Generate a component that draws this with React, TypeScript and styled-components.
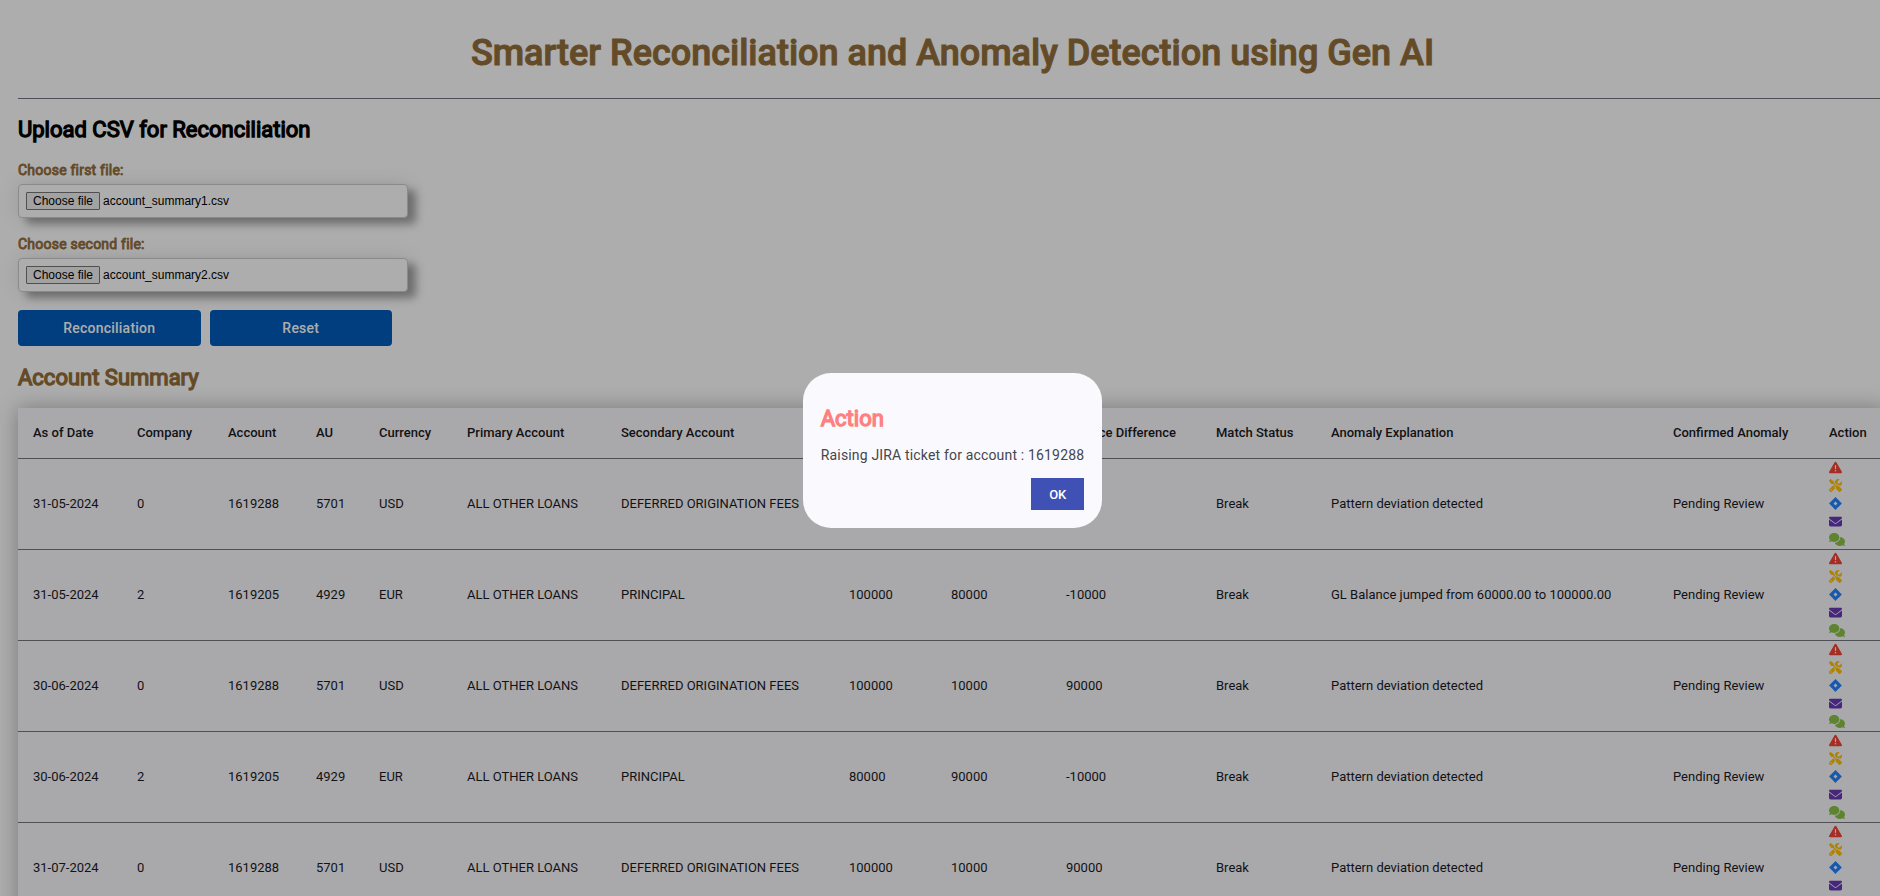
import React from 'react';
import styled, { createGlobalStyle } from 'styled-components';
import {
  FaTriangleExclamation,
  FaScrewdriverWrench,
  FaJira,
  FaEnvelope,
  FaComments,
} from 'react-icons/fa6';

const GlobalStyle = createGlobalStyle`
  *, *::before, *::after { box-sizing: border-box; }
  html { overflow: hidden; height: 100%; }
  body {
    margin: 0;
    height: 100%;
    overflow: hidden;
    background: #fff;
    color: #1a1b1f;
    font-family: Roboto, "Liberation Sans", sans-serif;
    font-size: 14px;
  }
`;

const Page = styled.div`
  margin-right: -25px;
  padding: 18px;
`;

const Title = styled.h1`
  margin: 0;
  padding: 11px 0 20px;
  border-bottom: 1px solid #74777f;
  color: #946f3c;
  font-size: 36px;
  font-weight: 500;
  line-height: 49px;
  text-align: center;
  -webkit-text-stroke: 1px currentColor;
`;

const Heading = styled.h2<{ $color?: string }>`
  margin: 0;
  color: ${({ $color }) => $color ?? '#000'};
  font-size: 22px;
  font-weight: 400;
  line-height: 28px;
  -webkit-text-stroke: 0.06em currentColor;
`;

const UploadForm = styled.form`
  display: flex;
  flex-direction: column;
  align-items: flex-start;
  padding: 17px 0 18px;
`;

const Field = styled.div`
  display: flex;
  flex-direction: column;
  width: 390px;
  margin-top: 16px;
`;

const FieldLabel = styled.label`
  margin-bottom: 4px;
  color: #946f3c;
  font-size: 14px;
  font-weight: 400;
  line-height: 20px;
  letter-spacing: 0.016em;
  -webkit-text-stroke: 0.06em currentColor;
`;

const FileInput = styled.input`
  position: absolute;
  width: 1px;
  height: 1px;
  opacity: 0;
`;

const FileBox = styled.label`
  display: flex;
  align-items: center;
  gap: 3px;
  height: 34px;
  padding: 0 7px;
  border: 1px solid #ccc;
  border-radius: 4px;
  background: #fff;
  box-shadow: 8px 6px 8px rgba(0, 0, 0, 0.34), 0 0 20px rgba(0, 0, 0, 0.1);
  color: #000;
  font-family: "Liberation Sans", Arial, sans-serif;
  font-size: 12px;
`;

const FileButton = styled.span`
  padding: 0 6px;
  border: 1px solid #767676;
  border-radius: 1px;
  background: #efefef;
  line-height: 16px;
`;

const Actions = styled.div`
  display: flex;
  gap: 9px;
  width: 374px;
  margin-top: 18px;
`;

const PrimaryButton = styled.button`
  flex: 1;
  height: 36px;
  border: 0;
  border-radius: 4px;
  background: #005cbb;
  color: #fff;
  font: 500 14px Roboto, sans-serif;
  letter-spacing: 0.016em;
`;

const Table = styled.table`
  width: 100%;
  margin-top: 16px;
  border-collapse: separate;
  border-spacing: 0;
  table-layout: fixed;
  background: #faf9fd;
  box-shadow: 0 0 20px rgba(0, 0, 0, 0.3);
  font-size: 13px;
  line-height: 18px;
  white-space: nowrap;
`;

const HeadCell = styled.th<{ $width: number }>`
  width: ${({ $width }) => $width}px;
  height: 51px;
  padding: 0 0 0 15px;
  border-bottom: 1px solid #74777f;
  font-weight: 500;
  text-align: left;
`;

const Cell = styled.td`
  padding: 0 0 0 15px;
  border-bottom: 1px solid #74777f;
`;

const IconStack = styled.div`
  display: flex;
  flex-direction: column;
  align-items: flex-start;
`;

const IconButton = styled.button<{ $color: string; $wide?: boolean }>`
  display: flex;
  align-items: center;
  height: 18px;
  padding: 0 0 2px;
  border: 0;
  background: none;
  color: ${({ $color }) => $color};

  svg {
    width: ${({ $wide }) => ($wide ? 16 : 13)}px;
    height: 13px;
  }
`;

const Backdrop = styled.div`
  position: fixed;
  inset: 0 -25px -5px 0;
  display: flex;
  align-items: center;
  justify-content: center;
  background: rgba(0, 0, 0, 0.32);
`;

const Dialog = styled.div`
  display: flex;
  flex-direction: column;
  padding: 32px 18px 18px;
  border-radius: 28px;
  background: #faf9fd;
`;

const DialogText = styled.p`
  margin: 12px 0 13px;
  color: #44474e;
  font-size: 14px;
  line-height: 20px;
  letter-spacing: 0.012em;
`;

const DialogButton = styled.button`
  align-self: flex-end;
  width: 53px;
  height: 32px;
  border: 0;
  background: #3f51b5;
  color: #fff;
  font: 500 13px Roboto, sans-serif;
`;

const columns: [string, number][] = [
  ['As of Date', 104],
  ['Company', 91],
  ['Account', 88],
  ['AU', 63],
  ['Currency', 88],
  ['Primary Account', 154],
  ['Secondary Account', 228],
  ['GL Balance', 102],
  ['iHub Balance', 115],
  ['Balance Difference', 150],
  ['Match Status', 115],
  ['Anomaly Explanation', 342],
  ['Confirmed Anomaly', 156],
  ['Action', 73],
];

const rows: string[][] = [
  ['31-05-2024', '0', '1619288', '5701', 'USD', 'ALL OTHER LOANS', 'DEFERRED ORIGINATION FEES', '15000', '10000', '5000', 'Break', 'Pattern deviation detected', 'Pending Review'],
  ['31-05-2024', '2', '1619205', '4929', 'EUR', 'ALL OTHER LOANS', 'PRINCIPAL', '100000', '80000', '-10000', 'Break', 'GL Balance jumped from 60000.00 to 100000.00', 'Pending Review'],
  ['30-06-2024', '0', '1619288', '5701', 'USD', 'ALL OTHER LOANS', 'DEFERRED ORIGINATION FEES', '100000', '10000', '90000', 'Break', 'Pattern deviation detected', 'Pending Review'],
  ['30-06-2024', '2', '1619205', '4929', 'EUR', 'ALL OTHER LOANS', 'PRINCIPAL', '80000', '90000', '-10000', 'Break', 'Pattern deviation detected', 'Pending Review'],
  ['31-07-2024', '0', '1619288', '5701', 'USD', 'ALL OTHER LOANS', 'DEFERRED ORIGINATION FEES', '100000', '10000', '90000', 'Break', 'Pattern deviation detected', 'Pending Review'],
];

const rowActions = [
  { label: 'Flag anomaly', color: '#f44336', Icon: FaTriangleExclamation },
  { label: 'Resolve', color: '#ffc107', Icon: FaScrewdriverWrench },
  { label: 'Raise JIRA ticket', color: '#2684ff', Icon: FaJira },
  { label: 'Send email', color: '#673ab7', Icon: FaEnvelope },
  { label: 'Comment', color: '#8bc34a', Icon: FaComments, wide: true },
];

function FileField({ id, label, file }: { id: string; label: string; file: string }) {
  return (
    <Field>
      <FieldLabel htmlFor={id}>{label}</FieldLabel>
      <FileBox htmlFor={id}>
        <FileInput id={id} type="file" accept=".csv" />
        <FileButton>Choose file</FileButton>
        <span>{file}</span>
      </FileBox>
    </Field>
  );
}

export default function App() {
  return (
    <>
      <GlobalStyle />
      <Page>
        <Title>Smarter Reconciliation and Anomaly Detection using Gen AI</Title>
        <UploadForm onSubmit={(e) => e.preventDefault()}>
          <Heading>Upload CSV for Reconciliation</Heading>
          <FileField id="first-file" label="Choose first file:" file="account_summary1.csv" />
          <FileField id="second-file" label="Choose second file:" file="account_summary2.csv" />
          <Actions>
            <PrimaryButton type="submit">Reconciliation</PrimaryButton>
            <PrimaryButton type="reset">Reset</PrimaryButton>
          </Actions>
        </UploadForm>
        <Heading $color="#946f3c">Account Summary</Heading>
        <Table>
          <thead>
            <tr>
              {columns.map(([name, width]) => (
                <HeadCell key={name} $width={width} scope="col">
                  {name}
                </HeadCell>
              ))}
            </tr>
          </thead>
          <tbody>
            {rows.map((row, r) => (
              <tr key={r}>
                {row.map((value, c) => (
                  <Cell key={c}>{value}</Cell>
                ))}
                <Cell>
                  <IconStack>
                    {rowActions.map(({ label, color, Icon, wide }) => (
                      <IconButton key={label} type="button" $color={color} $wide={wide} aria-label={label}>
                        <Icon />
                      </IconButton>
                    ))}
                  </IconStack>
                </Cell>
              </tr>
            ))}
          </tbody>
        </Table>
      </Page>
      <Backdrop>
        <Dialog role="dialog" aria-modal="true" aria-labelledby="dialog-title">
          <Heading id="dialog-title" $color="#ff8080">Action</Heading>
          <DialogText>Raising JIRA ticket for account : 1619288</DialogText>
          <DialogButton type="button">OK</DialogButton>
        </Dialog>
      </Backdrop>
    </>
  );
}
